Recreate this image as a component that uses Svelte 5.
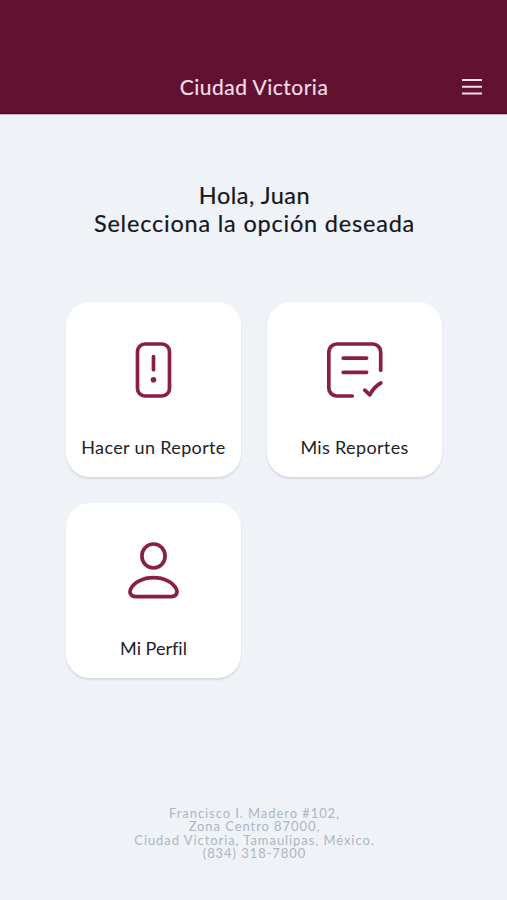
<script lang="ts">
    const city = "Ciudad Victoria";
    const name = "Juan";

    const options = [
        { id: "report", label: "Hacer un Reporte" },
        { id: "list", label: "Mis Reportes" },
        { id: "profile", label: "Mi Perfil" },
    ];
</script>

<div class="screen">
    <header>
        <h1>{city}</h1>
        <button class="menu" aria-label="Menú">
            <svg width="20" height="16" viewBox="0 0 20 16">
                <path d="M0 1h20M0 7.700h20M0 14.400h20" />
            </svg>
        </button>
    </header>

    <main>
        <div class="greeting">
            <p class="hello">Hola, {name}</p>
            <p class="prompt">Selecciona la opción deseada</p>
        </div>

        <section class="options">
            {#each options as option (option.id)}
                <button class="card {option.id}">
                    <svg class="icon" width="60" height="60" viewBox="0 0 60 60">
                        {#if option.id === "report"}
                            <rect x="14.5" y="4" width="32" height="52" rx="7.5" />
                            <path d="M30.5 16.7v13" />
                            <circle class="dot" cx="30.5" cy="39.8" r="2.8" />
                        {:else if option.id === "list"}
                            <path d="M56.7 30.2V12a8 8 0 0 0-8-8H12.8a8 8 0 0 0-8 8v36a8 8 0 0 0 8 8h15.4" />
                            <path d="M19.2 18.1h23.4M19.2 32.3h23.4" />
                            <path d="M40.8 50.2l5 4.7Q50 46.6 56.8 43" />
                        {:else}
                            <ellipse cx="30.5" cy="15" rx="11.6" ry="12" />
                            <path d="M30.5 36.7C19.8 36.7 10.8 41.5 7.7 48C5.8 52 8 55.7 12.8 55.7H48.2C53 55.7 55.2 52 53.3 48C50.2 41.5 41.2 36.7 30.5 36.7Z" />
                        {/if}
                    </svg>
                    <span class="label">{option.label}</span>
                </button>
            {/each}
        </section>
    </main>

    <footer>
        <span>Francisco I. Madero #102,</span>
        <span>Zona Centro 87000,</span>
        <span>Ciudad Victoria, Tamaulipas, México.</span>
        <span>(834) 318-7800</span>
    </footer>
</div>

<style>
    :global(body) {
        margin: 0;
        background: #eff3f8;
    }

    .screen {
        height: 900px;
        display: flex;
        flex-direction: column;
        background: #eff3f8;
        font-family: Lato, "Open Sans", sans-serif;
        color: #15171c;
        white-space: nowrap;
    }

    header {
        box-sizing: border-box;
        height: 114px;
        padding: 60px 25px 0;
        display: grid;
        grid-template-columns: 1fr auto 1fr;
        align-items: center;
        background: #611230;
        border-bottom: 1px solid #500b25;
        box-shadow: 0 1px 0 #c9b3c0;
    }

    h1 {
        grid-column: 2;
        margin: 0;
        padding-left: 1px;
        font-size: 21px;
        font-weight: 400;
        line-height: 28px;
        letter-spacing: 0.5px;
        color: #f5dce6;
        -webkit-text-stroke: 0.2px;
    }

    button {
        border: 0;
        padding: 0;
        font: inherit;
        color: inherit;
    }

    .menu {
        justify-self: end;
        display: flex;
        background: none;
    }

    .menu svg {
        fill: none;
        stroke: #f5dce6;
        stroke-width: 2;
    }

    main {
        flex: 1;
    }

    .greeting {
        margin-top: 67px;
        padding-left: 2px;
        font-size: 23.5px;
        line-height: 28px;
        text-align: center;
        -webkit-text-stroke: 0.2px;
    }

    .greeting p {
        margin: 0;
    }

    .hello {
        letter-spacing: 0.5px;
    }

    .prompt {
        letter-spacing: 0.8px;
    }

    .options {
        display: grid;
        grid-template-columns: 175px 175px;
        gap: 26px;
        margin: 65px 0 0 66px;
    }

    .card {
        box-sizing: border-box;
        height: 175px;
        padding-top: 38px;
        display: flex;
        flex-direction: column;
        align-items: center;
        justify-content: flex-start;
        background: #fff;
        border-radius: 24px;
        box-shadow: 0 2px 2px rgba(40, 45, 60, 0.12);
    }

    .icon {
        margin-right: 1px;
        fill: none;
        stroke: #8a1f46;
        stroke-width: 3.7;
        stroke-linecap: round;
        stroke-linejoin: round;
    }

    .icon .dot {
        fill: #8a1f46;
        stroke: none;
    }

    .label {
        margin-top: 35px;
        font-size: 18px;
        line-height: 24px;
        letter-spacing: 0.35px;
        color: #222226;
    }

    .profile .label {
        letter-spacing: 0;
        font-variant-ligatures: none;
    }

    footer {
        padding: 0 0 40px 2px;
        display: flex;
        flex-direction: column;
        align-items: center;
        font-size: 13px;
        line-height: 13.2px;
        letter-spacing: 0.93px;
        color: #afb5bf;
    }
</style>
